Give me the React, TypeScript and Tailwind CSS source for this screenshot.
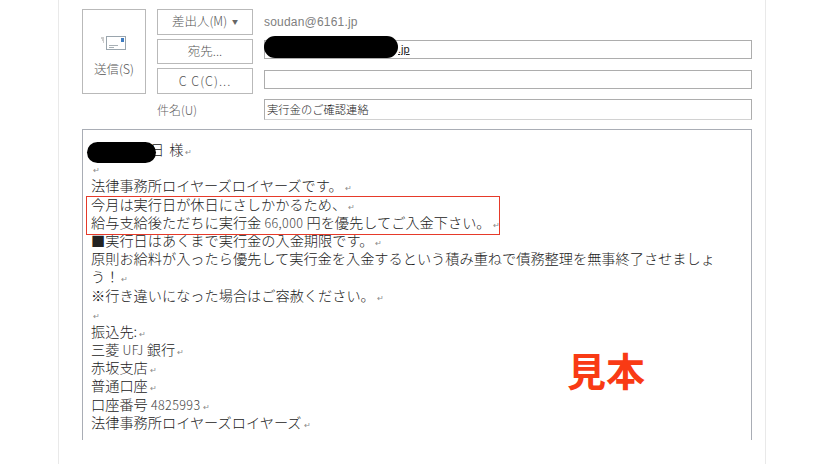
const jp = "font-['Noto_Sans_CJK_JP','Liberation_Sans',sans-serif]";
const num = "text-[12.5px] leading-none tracking-[0.4px] text-[#444]";

function Ret() {
  return <span className="ml-[2px] font-['DejaVu_Sans',sans-serif] text-[8px] leading-none tracking-normal text-[#8a8a8a]">↵</span>;
}

function Line({ children, className = "" }: { children?: React.ReactNode; className?: string }) {
  return (
    <div className={`h-[18.2px] whitespace-nowrap text-[14.2px] leading-[18.2px] font-light text-[#222] ${className}`}>
      {children}
      <Ret />
    </div>
  );
}

function Btn({ children }: { children: React.ReactNode }) {
  return (
    <div className="flex h-[26px] w-[96px] items-center justify-center border border-[#b9b9b9] text-[12.5px] font-light text-[#555]">
      {children}
    </div>
  );
}

function Blob({ className }: { className: string }) {
  return <div className={`absolute rounded-full bg-black ${className}`} />;
}

export default function App() {
  return (
    <div className={`h-[464px] w-[825px] overflow-hidden bg-white ${jp}`}>
      <div className="ml-[58px] h-[464px] w-[708px] border-x border-[#e9e9e9] pl-[23px] pr-[13px] pt-[9px]">
        <div className="flex h-[85px] gap-[11px]">
          <div className="flex h-[85px] w-[64px] flex-col items-center border border-[#b9b9b9] pt-[25px]">
            <svg width="28" height="16" viewBox="0 0 28 16" fill="none" className="-ml-[3px]">
              <path d="M2 3h3M3 5h2M4 7h1" stroke="#9a9a9a" strokeWidth="1" />
              <rect x="7.5" y="1.5" width="19" height="13" fill="#fff" stroke="#9aa5ad" />
              <path d="M10 10.5h9M10 12.5h5" stroke="#a8b0b5" />
              <rect x="22" y="3" width="3" height="4" fill="#3f7cc0" />
            </svg>
            <div className="mt-[10px] text-[12.5px] leading-[16px] font-light text-[#555]">送信(S)</div>
          </div>
          <div className="flex flex-col gap-[4px]">
            <Btn>
              差出人(M)
              <span className="ml-[5px] text-[6px] text-[#666]">▼</span>
            </Btn>
            <Btn>宛先...</Btn>
            <Btn>
              <span className="tracking-[1px]">C C(C)...</span>
            </Btn>
          </div>
          <div className="relative flex-1">
            <div className="flex h-[26px] items-center text-[12px] tracking-[0.2px] text-[#808080] font-['Liberation_Sans',sans-serif]">
              soudan@6161.jp
            </div>
            <div className="mt-[5px] flex h-[19px] items-center justify-start border border-[#adadad] pl-[133px] text-[11px] leading-none text-[#222] underline font-['Liberation_Sans',sans-serif]">
              .jp
            </div>
            <div className="mt-[11px] h-[19px] border border-[#adadad]" />
            <Blob className="left-0 top-[27px] h-[22px] w-[134px]" />
          </div>
        </div>
        <div className="mt-[5px] flex h-[21px] items-center gap-[11px]">
          <div className="w-[64px]" />
          <div className="w-[96px] text-[12px] font-light text-[#666]">件名(U)</div>
          <div className="flex h-[21px] flex-1 items-center border border-[#adadad] border-b-[#d2d2d2] pl-[2px] text-[11.3px] font-light text-[#222]">
            実行金のご確認連絡
          </div>
        </div>
        <div className="relative mt-[9px] h-[311px] overflow-hidden border-x border-t border-[#a9adb5] pl-[8px] pt-[10px]">
          <Blob className="left-[4px] top-[12px] h-[21px] w-[69px]" />
          <Line className="pl-[59px]">
            <span className="mr-[5px]">日</span>様
          </Line>
          <Line />
          <Line>法律事務所ロイヤーズロイヤーズです。</Line>
          <div className="relative">
            <div className="pointer-events-none absolute -left-[5px] top-[1px] h-[39px] w-[414px] border border-[#e63a2a]" />
            <Line>今月は実行日が休日にさしかかるため、</Line>
            <Line>
              給与支給後ただちに実行金 <span className={num}>66,000</span> 円を優先してご入金下さい。
            </Line>
          </div>
          <Line>■実行日はあくまで実行金の入金期限です。</Line>
          <div className="h-[18.2px] whitespace-nowrap text-[14.2px] leading-[18.2px] font-light text-[#222]">
            原則お給料が入ったら優先して実行金を入金するという積み重ねで債務整理を無事終了させましょ
          </div>
          <Line>う！</Line>
          <Line>※行き違いになった場合はご容赦ください。</Line>
          <Line />
          <Line>振込先:</Line>
          <Line>
            三菱 <span className={num}>UFJ</span> 銀行
          </Line>
          <Line>赤坂支店</Line>
          <Line>普通口座</Line>
          <Line>
            口座番号 <span className={num}>4825993</span>
          </Line>
          <Line>法律事務所ロイヤーズロイヤーズ</Line>
          <Line />
          <div className="absolute left-[484px] top-[217px] text-[39px] leading-[44px] font-bold text-[#f93a14]">見本</div>
        </div>
      </div>
    </div>
  );
}
